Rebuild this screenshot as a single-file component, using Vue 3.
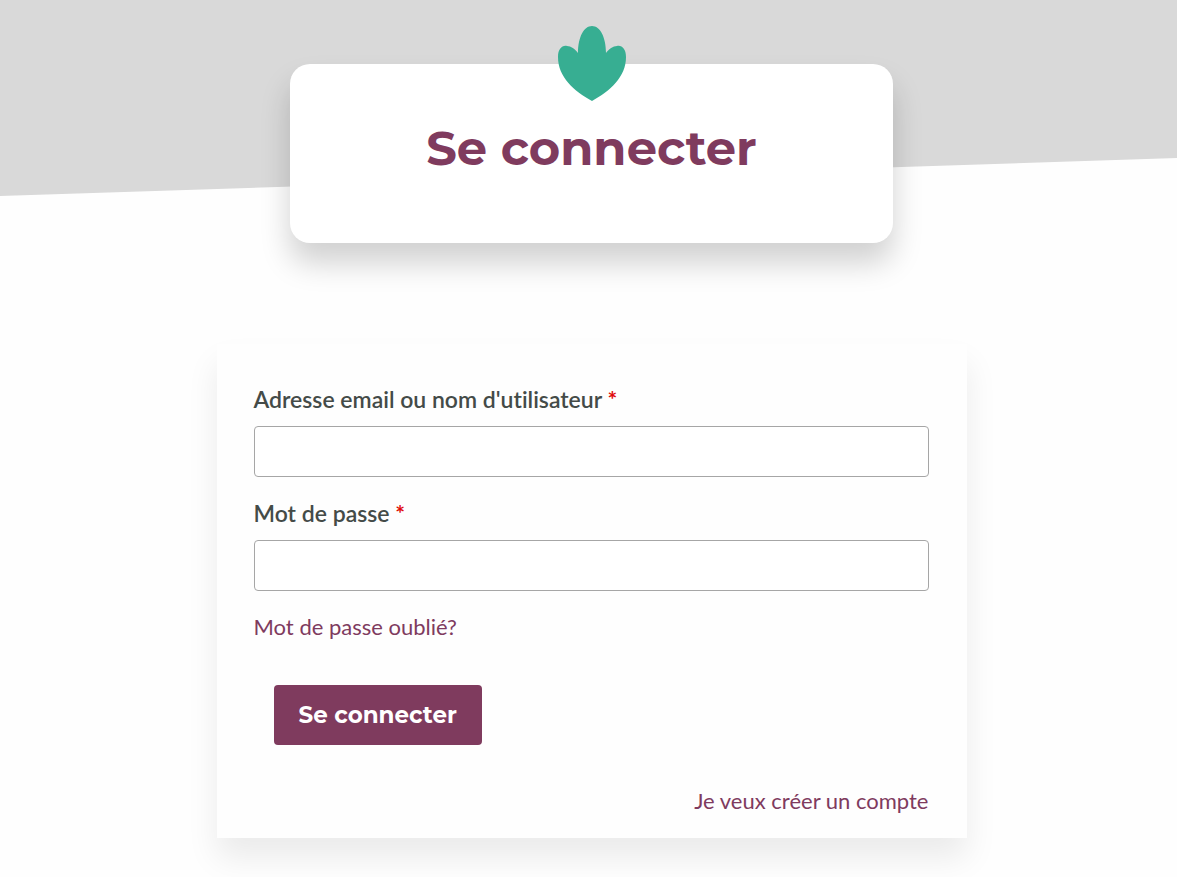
<script setup>
import { ref } from 'vue'

const username = ref('')
const password = ref('')
</script>

<template>
  <div class="page">
    <header class="hero">
      <div class="title-card">
        <svg class="leaf" viewBox="0 0 70 76" aria-hidden="true">
          <path d="M35 76C17 66 1 52 1 32C1 24 5 20 10 21C14 21 18 24 21 28C21 12 27 1 35 1C43 1 49 12 49 28C52 24 56 21 60 21C65 20 69 24 69 32C69 52 53 66 35 76Z" />
        </svg>
        <h1>Se connecter</h1>
      </div>
    </header>
    <main>
      <form class="login" @submit.prevent>
        <label for="username">Adresse email ou nom d'utilisateur <span class="required">*</span></label>
        <input id="username" v-model="username" type="text" autocomplete="username" />
        <label for="password">Mot de passe <span class="required">*</span></label>
        <input id="password" v-model="password" type="password" autocomplete="current-password" />
        <a class="forgot" href="#">Mot de passe oublié?</a>
        <button type="submit">Se connecter</button>
        <a class="register" href="#">Je veux créer un compte</a>
      </form>
    </main>
  </div>
</template>

<style>
body {
  margin: 0;
  background: #fefefe;
}
</style>

<style scoped>
.page {
  box-sizing: border-box;
  min-height: 100vh;
  padding: 0 0 39px 6px;
  font-family: Lato, "Open Sans", sans-serif;
  font-size: 22px;
  line-height: 32px;
  font-variant-ligatures: none;
  color: #444b48;
  position: relative;
  overflow: hidden;
}

.page::before {
  content: "";
  position: absolute;
  inset: 0 0 auto;
  height: 196px;
  background: #d9d9d9;
  clip-path: polygon(0 0, 100% 0, 100% 158px, 0 100%);
}

.hero {
  position: relative;
  padding: 64px 24px 0;
}

.title-card {
  position: relative;
  box-sizing: border-box;
  max-width: 603px;
  margin: 0 auto;
  padding: 52px 24px 63px;
  border-radius: 20px;
  background: #fff;
  box-shadow: 0 20px 30px rgba(0, 0, 0, 0.18);
  text-align: center;
}

.leaf {
  position: absolute;
  top: -39px;
  left: calc(50% - 35px);
  width: 70px;
  height: 76px;
  fill: #37ae92;
}

h1 {
  margin: 0;
  font: 700 48px/64px Montserrat, Inter, sans-serif;
  color: #7f3b5e;
}

main {
  position: relative;
  padding: 101px 24px 0;
}

.login {
  display: flex;
  flex-direction: column;
  box-sizing: border-box;
  max-width: 750px;
  margin: 0 auto;
  padding: 39px 38px 21px 37px;
  background: #fefefe;
  box-shadow: 0 20px 30px rgba(0, 0, 0, 0.08);
}

label {
  margin-bottom: 11px;
  font-size: 23px;
  font-weight: 600;
}

.required {
  color: #e00b0b;
  font-weight: 700;
}

input {
  box-sizing: border-box;
  width: 100%;
  height: 51px;
  margin: 0 0 20px;
  padding: 0 12px;
  border: 1px solid #a6a6a6;
  border-radius: 4px;
  background: #fff;
  font: inherit;
  color: inherit;
}

a {
  color: #7f3b5e;
  text-decoration: none;
}

.forgot {
  align-self: flex-start;
}

button {
  align-self: flex-start;
  margin: 42px 20px 40px;
  padding: 14px 25px;
  border: 0;
  border-radius: 4px;
  background: #7f3b5e;
  color: #fff;
  font: 700 23px/32px Montserrat, Inter, sans-serif;
  cursor: pointer;
}

.register {
  align-self: flex-end;
}
</style>
